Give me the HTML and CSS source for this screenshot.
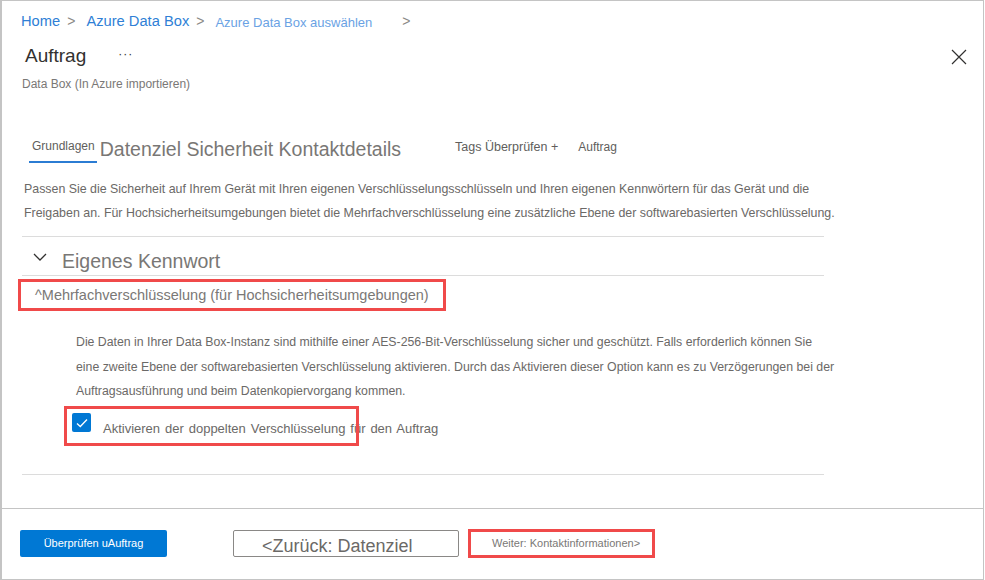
FILE: index.html
```html
<!DOCTYPE html>
<html lang="de">
<head>
<meta charset="utf-8">
<title>Auftrag</title>
<link rel="stylesheet" href="styles.css">
</head>
<body>
<div class="frame">
  <div class="main">
    <nav class="crumbs">
      <a class="crumb">Home</a>
      <span class="sep">&gt;</span>
      <a class="crumb">Azure Data Box</a>
      <span class="sep">&gt;</span>
      <a class="crumb small">Azure Data Box auswählen</a>
      <span class="sep last">&gt;</span>
    </nav>
    <div class="title-row">
      <h1 class="title">Auftrag</h1>
      <span class="more">···</span>
      <span class="spacer"></span>
      <svg class="close" width="16" height="16" viewBox="0 0 16 16"><path d="M1 1 L15 15 M15 1 L1 15" stroke="#323130" stroke-width="1.2" fill="none"/></svg>
    </div>
    <div class="subtitle">Data Box (In Azure importieren)</div>

    <div class="tabs">
      <div class="tab active">Grundlagen</div>
      <div class="tab big">Datenziel Sicherheit Kontaktdetails</div>
      <div class="tab mid">Tags Überprüfen +</div>
      <div class="tab last">Auftrag</div>
    </div>

    <p class="intro">Passen Sie die Sicherheit auf Ihrem Gerät mit Ihren eigenen Verschlüsselungsschlüsseln und Ihren eigenen Kennwörtern für das Gerät und die<br>Freigaben an. Für Hochsicherheitsumgebungen bietet die Mehrfachverschlüsselung eine zusätzliche Ebene der softwarebasierten Verschlüsselung.</p>

    <div class="section">
      <div class="section-head">
        <svg class="chev" width="14" height="8" viewBox="0 0 14 8"><path d="M1 1 L7 7 L13 1" stroke="#323130" stroke-width="1.3" fill="none"/></svg>
        <span>Eigenes Kennwort</span>
      </div>
      <div class="hl hl-multi">^Mehrfachverschlüsselung (für Hochsicherheitsumgebungen)</div>
      <p class="desc">Die Daten in Ihrer Data Box-Instanz sind mithilfe einer AES-256-Bit-Verschlüsselung sicher und geschützt. Falls erforderlich können Sie<br>eine zweite Ebene der softwarebasierten Verschlüsselung aktivieren. Durch das Aktivieren dieser Option kann es zu Verzögerungen bei der<br>Auftragsausführung und beim Datenkopiervorgang kommen.</p>
      <div class="check-row">
        <div class="hl hl-check"></div>
        <span class="checkbox"><svg width="12" height="10" viewBox="0 0 12 10"><path d="M1 5.5 L4.3 8.5 L11 1.5" stroke="#fff" stroke-width="1.3" fill="none"/></svg></span>
        <span class="check-label">Aktivieren der doppelten Verschlüsselung für den Auftrag</span>
      </div>
    </div>
  </div>

  <footer class="footer">
    <button class="btn primary">Überprüfen uAuftrag</button>
    <button class="btn secondary">&lt;Zurück: Datenziel</button>
    <button class="btn link hl">Weiter: Kontaktinformationen&gt;</button>
  </footer>
</div>
</body>
</html>
```

FILE: styles.css
```css
* { box-sizing: border-box; }
html, body { margin: 0; padding: 0; background: #fff; }
body { font-family: "Liberation Sans", Arial, sans-serif; color: #605e5c; }

.frame {
  width: 984px;
  height: 580px;
  border: 1px solid #c4c4c4;
  border-left-width: 2px;
  display: flex;
  flex-direction: column;
}

.main {
  flex: 1;
  padding: 0 0 0 18px;
}

.crumbs {
  display: flex;
  align-items: center;
  height: 20px;
  margin-top: 10px;
  font-size: 14.7px;
  padding-left: 1px;
  white-space: nowrap;
}
.crumb { color: #2f7fd6; }
.crumb.small { font-size: 13px; color: #6aa2e4; margin-top: 2px; }
.sep { color: #8a8886; margin: 0 11px 0 7px; font-size: 14px; }
.sep.last { margin-left: 30px; }

.title-row {
  display: flex;
  align-items: center;
  height: 28px;
  margin-top: 11px;
}
.title {
  margin: 0 0 0 5px;
  font-size: 19px;
  font-weight: normal;
  color: #323130;
}
.more { margin-left: 32px; color: #323130; font-size: 12px; letter-spacing: 1px; margin-top: -4px; }
.spacer { flex: 1; }
.close { margin-right: 16px; margin-top: 2px; }

.subtitle {
  font-size: 12px;
  color: #7a7876;
  margin-top: 7px;
  padding-left: 2px;
}

.tabs {
  display: flex;
  align-items: flex-start;
  margin-top: 49px;
  height: 32px;
  white-space: nowrap;
}
.tab { font-size: 12px; color: #605e5c; }
.tab.active {
  margin-left: 9px;
  padding: 0 2px 8px 2px;
  border-bottom: 2px solid #2b7cd3;
  height: 23px;
  line-height: 13px;
  text-indent: 1px;
}
.tab.big { font-size: 19.5px; color: #797775; margin-left: 3px; margin-top: -3px; line-height: 24px; }
.tab.mid { font-size: 12.5px; margin-left: 54px; }
.tab.last { margin-left: 20px; }

.intro {
  margin: 5px 0 0 4px;
  font-size: 12.4px;
  line-height: 24px;
  color: #6b6967;
  white-space: nowrap;
}

.section {
  width: 802px;
  margin-top: 11px;
  margin-left: 2px;
  border-top: 1px solid #dcdcdc;
  border-bottom: 1px solid #dcdcdc;
  padding-bottom: 28px;
}

.section-head {
  display: flex;
  align-items: center;
  height: 39px;
  border-bottom: 1px solid #dcdcdc;
  font-size: 19.5px;
  color: #797775;
  padding-top: 10px;
}
.chev { margin-left: 11px; margin-right: 15px; margin-top: -8px; }

.hl { border: 3px solid #f04a4a; }

.hl-multi {
  margin: 3px 0 0 -4px;
  width: 428px;
  height: 32px;
  padding-left: 14px;
  font-size: 14.5px;
  line-height: 26px;
  color: #7a7876;
  white-space: nowrap;
}

.desc {
  margin: 19px 0 0 54px;
  font-size: 12.3px;
  line-height: 24.5px;
  color: #6b6967;
  white-space: nowrap;
}

.check-row {
  position: relative;
  display: flex;
  align-items: center;
  margin: 2px 0 0 50px;
  height: 40px;
  white-space: nowrap;
}
.hl-check {
  position: absolute;
  left: -8px;
  top: 0;
  width: 295px;
  height: 40px;
}
.checkbox {
  width: 19px;
  height: 19px;
  background: #0078d4;
  border-radius: 2px;
  display: flex;
  align-items: center;
  justify-content: center;
  margin-top: -6px;
}
.check-label {
  margin-left: 12px;
  font-size: 13px;
  word-spacing: 1.3px;
  color: #6b6967;
  margin-top: 6px;
}

.footer {
  height: 71px;
  border-top: 1px solid #c4c4c4;
  display: flex;
  align-items: center;
  padding-left: 18px;
  padding-bottom: 2px;
}
.btn {
  font-family: "Liberation Sans", Arial, sans-serif;
  height: 27px;
  border-radius: 2px;
  cursor: pointer;
  white-space: nowrap;
}
.btn.primary {
  width: 147px;
  background: #0078d4;
  border: none;
  color: #fff;
  font-size: 11px;
}
.btn.secondary {
  width: 226px;
  margin-left: 66px;
  background: #fff;
  border: 1px solid #8a8886;
  color: #6b6967;
  font-size: 18px;
  padding: 4px 0 0 28px;
  text-align: left;
  line-height: 22px;
}
.btn.link {
  width: 187px;
  height: 29px;
  margin-left: 9px;
  background: #fff;
  border-radius: 0;
  color: #7a7876;
  font-size: 11px;
  text-align: left;
  padding-left: 21px;
}
```
